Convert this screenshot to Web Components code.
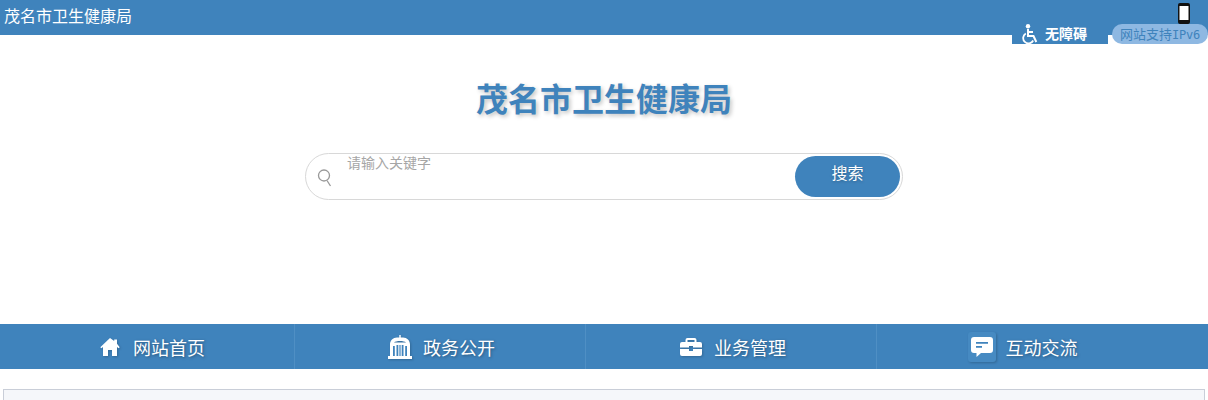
<!DOCTYPE html>
<html lang="zh"><head><meta charset="utf-8"><title>茂名市卫生健康局</title>
<style>
html,body{margin:0;padding:0;background:#fff;overflow:hidden}
body{font-family:"Noto Sans CJK SC","Noto Sans",sans-serif;height:400px}
</style></head><body>
<site-top title-text="茂名市卫生健康局"></site-top>
<site-brand></site-brand>
<site-search></site-search>
<site-nav>
  <nav-item label="网站首页" style="--g:13px;--s:7px"><svg viewBox="0 0 20 18" width="20" height="18"><path fill="#fff" d="M10 0 .3 9.200l1.100 1.100L3 9v9h5v-6h4v6h5V9l1.600 1.300 1.100-1.100L17 5.700V1.500h-2.800v1.500z"/></svg></nav-item>
  <nav-item label="政务公开" style="--g:11px;--s:3px"><svg viewBox="0 0 24 24" width="24" height="24"><path fill="#fff" d="M11.300 0h1.400v2.500h-1.400zM2 9.500C2 5.500 5 2.500 9 2.500h6c4 0 7 3 7 7V21h2v3H0v-3h2zM6 7.500h12C16 5.500 8 5.500 6 7.500z"/><path fill="#3f83bc" d="M5 11h1.800v10H5zM8.500 10h1.800v11H8.500zM13.700 10h1.800v11h-1.800zM17.200 11H19v10h-1.800zM11.400 10h1.200v11h-1.200z"/></svg></nav-item>
  <nav-item label="业务管理" style="--g:12px;--s:4px"><svg viewBox="0 0 22 18" width="22" height="18"><path fill="#fff" d="M7.500 0h7a2 2 0 0 1 2 2v2H20a2 2 0 0 1 2 2v3.500H13V8H9v1.500H0V6a2 2 0 0 1 2-2h3.500V2a2 2 0 0 1 2-2zm0 2v2h7V2zM0 11h9v2h4v-2h9v5a2 2 0 0 1-2 2H2a2 2 0 0 1-2-2z"/></svg></nav-item>
  <nav-item label="互动交流" tile style="--g:10px"><svg viewBox="0 0 22 20" width="22" height="20"><path fill="#fff" d="M3 0h16a3 3 0 0 1 3 3v10a3 3 0 0 1-3 3h-9l-4.500 4v-4H3a3 3 0 0 1-3-3V3a3 3 0 0 1 3-3z"/><path fill="#3f83bc" d="M5 5h12v1.800H5zM5 9h6v1.800H5z"/></svg></nav-item>
</site-nav>
<site-panel></site-panel>
<script>
function def(name,html,init){
  customElements.define(name,class extends HTMLElement{
    constructor(){super();this.attachShadow({mode:"open"}).innerHTML=html;}
    connectedCallback(){if(init)init.call(this,this.shadowRoot);}
  });
}
def("site-top",`<style>
:host{display:flex;justify-content:space-between;height:35px;background:#3f83bc;color:#fff}
.t{font-size:16px;line-height:31px;padding-left:4px;white-space:nowrap}
.tools{display:flex;align-items:flex-end;height:44px;gap:4px}
.acc{display:flex;align-items:flex-start;width:96px;height:44px;box-sizing:border-box;padding:24px 0 0 8px;background:#3f83bc;font-size:14px;font-weight:700;gap:7px;line-height:18px}
.acc svg{flex:none}
.right{width:96px;height:44px;display:flex;flex-direction:column;align-items:center}
.ph{height:21px;margin:3px 0 0 48px;display:block}
.pill{box-sizing:border-box;width:96px;height:20px;border-radius:10px;background:#8eb8e2;color:#3f83bc;font-size:13px;line-height:20px;text-align:center;white-space:nowrap}
.pill span{font-family:"DejaVu Sans Mono",monospace;font-size:12px;letter-spacing:-.2px}
</style><div class="t"></div><div class="tools"><div class="acc"><svg viewBox="0 0 18 20" width="18" height="20"><circle cx="8" cy="2.200" r="2.200" fill="#fff"/><path fill="none" stroke="#fff" stroke-width="2" d="M8 5v7h5.500l2.800 6"/><path fill="none" stroke="#fff" stroke-width="1.800" d="M8 8h5M5.800 9.500a5.300 5.300 0 1 0 7.400 7"/></svg><span>无障碍</span></div><div class="right"><svg class="ph" viewBox="0 0 12 21" width="12" height="21"><rect x="0" y="0" width="12" height="21" rx="2" fill="#111"/><rect x="1.500" y="3" width="9" height="14" fill="#fff"/></svg><div class="pill">网站支持<span>IPv6</span></div></div></div>`,
function(r){r.querySelector(".t").textContent=this.getAttribute("title-text");});
def("site-brand",`<style>
:host{display:block;margin-top:41px;height:43px;text-align:center;font-size:32px;line-height:43px;font-weight:700;color:#3f83bc;text-shadow:2px 2px 4px rgba(0,0,0,.24);white-space:nowrap}
</style>茂名市卫生健康局`);
def("site-search",`<style>
:host{display:block;box-sizing:border-box;width:598px;height:47px;margin:34px 0 0 305px;border:1px solid #d8d8d8;border-radius:24px;background:#fff}
.w{display:flex;align-items:flex-start;height:45px;padding-right:2px}
svg{margin:14px 0 0 11px;flex:none}
.p{flex:1;margin-left:14px;font-size:14px;line-height:16px;color:#a6a6a6}
.b{width:105px;height:41px;margin-top:2px;border-radius:21px;background:#3f83bc;color:#fff;font-size:16px;line-height:32px;text-align:center;text-shadow:0 1px 3px rgba(0,0,0,.25)}
</style><div class="w"><svg viewBox="0 0 16 20" width="16" height="20"><circle cx="7" cy="7.500" r="5.500" fill="none" stroke="#999" stroke-width="1.300"/><path d="M10 12.500l3.500 5.500" stroke="#999" stroke-width="1.300" fill="none"/></svg><div class="p">请输入关键字</div><div class="b">搜索</div></div>`);
def("site-nav",`<style>
:host{display:grid;grid-template-columns:repeat(4,291px);box-sizing:border-box;height:45px;margin-top:124px;padding-left:4px;background:#3f83bc}
</style><slot></slot>`);
def("nav-item",`<style>
:host{display:flex;align-items:center;justify-content:center;gap:var(--g,11px);padding-left:var(--s,0);height:45px;box-sizing:border-box;color:#fff;font-size:18px;line-height:45px;text-shadow:1px 1px 3px rgba(0,0,0,.35);border-right:1px solid #4f8fc4;white-space:nowrap}
:host(:last-child){border-right:0}
.l{padding-top:2px}
.i{display:flex;align-items:center;justify-content:center;height:30px;filter:drop-shadow(1px 1px 1px rgba(0,0,0,.2))}
:host([tile]) .i{width:28px;background:#468ac2;border-radius:3px}
</style><span class="i"><slot></slot></span><span class="l"></span>`,
function(r){r.querySelector(".l").textContent=this.getAttribute("label");});
def("site-panel",`<style>
:host{display:block;box-sizing:border-box;margin:20px 3px 0;height:11px;background:#f5f7fa;border:1px solid #c9ced8;border-bottom:0}
</style>`);
</script>
</body></html>
